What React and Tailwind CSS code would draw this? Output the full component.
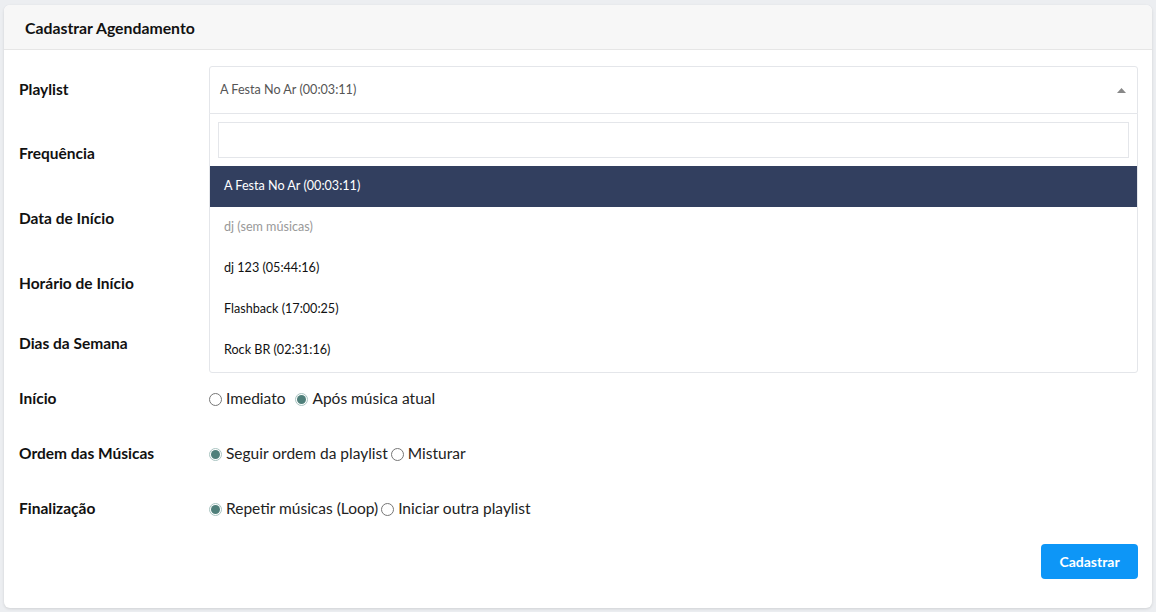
import { useState } from "react"

const playlists = [
  { name: "A Festa No Ar (00:03:11)", active: true },
  { name: "dj (sem músicas)", disabled: true },
  { name: "dj 123 (05:44:16)" },
  { name: "Flashback (17:00:25)" },
  { name: "Rock BR (02:31:16)" },
]

function Radio({ checked, label, className = "" }) {
  return (
    <label className={`inline-flex items-center gap-[4px] ${className}`}>
      {checked ? (
        <span className="w-[13px] h-[13px] rounded-full border border-[#a9c4c1] bg-white flex items-center justify-center">
          <span className="w-[9px] h-[9px] rounded-full bg-[#4f7f7a]"></span>
        </span>
      ) : (
        <span className="w-[13px] h-[13px] rounded-full border border-[#767676] bg-white"></span>
      )}
      <span>{label}</span>
    </label>
  )
}

function Row({ label, className = "", children }) {
  return (
    <div className={`flex items-center h-12 ${className}`}>
      <div className="w-[190px] shrink-0 font-bold text-[15.5px] text-[#111]">{label}</div>
      <div className="flex-1 relative">{children}</div>
    </div>
  )
}

export default function App() {
  const [selected] = useState(playlists[0].name)

  return (
    <div className="min-h-screen bg-[#eceef1] pt-[5px] pl-[4px] font-['Lato','Liberation_Sans',sans-serif]">
      <div className="bg-white rounded-[6px] shadow-[0_1px_3px_rgba(0,0,0,0.12)] h-[603px] w-[1148px] flex flex-col">
        <div className="h-[45px] bg-[#f7f7f7] border-b border-[#e6e6e6] rounded-t-[6px] flex items-center px-[21px]">
          <h1 className="font-bold text-[15.8px] text-[#111] translate-y-[1px]">Cadastrar Agendamento</h1>
        </div>

        <div className="relative pt-[16px] pl-[15px] pr-[14px]">
          <Row label="Playlist" className="relative z-10">
            <div className="h-12 border border-[#e4e6ea] rounded-t-[3px] bg-white flex items-center pl-[10px] pr-[10px] text-[12.6px] text-[#555]">
              <span className="flex-1">{selected}</span>
              <svg width="9" height="5" viewBox="0 0 9 5" className="mr-[1px]">
                <path d="M0 5 L4.5 0 L9 5 Z" fill="#888" />
              </svg>
            </div>
            <div className="absolute left-0 right-0 top-[47px] bg-white border border-[#e4e6ea] rounded-b-[3px] pb-px">
              <div className="p-[8px]">
                <input className="w-full h-[36px] border border-[#e4e6ea] outline-none px-2 text-[13px]" />
              </div>
              <ul className="text-[12.6px]">
                {playlists.map((p) => (
                  <li
                    key={p.name}
                    className={`h-[41px] flex items-center pl-[14px] ${
                      p.active ? "bg-[#323f5f] text-white" : p.disabled ? "text-[#999]" : "text-[#111]"
                    }`}
                  >
                    {p.name}
                  </li>
                ))}
              </ul>
            </div>
          </Row>

          <Row label="Frequência" className="mt-[16px]">
            <div className="h-[38px] border border-[#e4e6ea]"></div>
          </Row>
          <Row label="Data de Início" className="mt-[17px]">
            <div className="h-[38px] border border-[#e4e6ea]"></div>
          </Row>
          <Row label="Horário de Início" className="mt-[17px]">
            <div className="h-[38px] border border-[#e4e6ea]"></div>
          </Row>
          <Row label="Dias da Semana" className="mt-[12px]">
            <div className="h-[20px]"></div>
          </Row>

          <Row label="Início" className="mt-[7px]">
            <div className="text-[15.5px] text-[#222] flex items-center">
              <Radio label="Imediato" />
              <Radio checked label="Após música atual" className="ml-[10px]" />
            </div>
          </Row>
          <Row label="Ordem das Músicas" className="mt-[7px]">
            <div className="text-[15.5px] text-[#222] flex items-center">
              <Radio checked label="Seguir ordem da playlist" />
              <Radio label="Misturar" className="ml-[3px]" />
            </div>
          </Row>
          <Row label="Finalização" className="mt-[7px]">
            <div className="text-[15.5px] text-[#222] flex items-center">
              <Radio checked label="Repetir músicas (Loop)" />
              <Radio label="Iniciar outra playlist" className="ml-[3px]" />
            </div>
          </Row>

          <div className="flex justify-end mt-[11px]">
            <button className="h-[35px] w-[97px] rounded-[4px] bg-[#0d96f7] text-white font-bold text-[14px]">
              Cadastrar
            </button>
          </div>
        </div>
      </div>
    </div>
  )
}
